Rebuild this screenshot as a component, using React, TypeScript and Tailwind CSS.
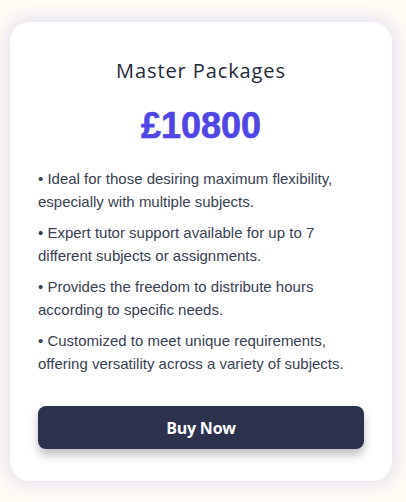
export default function App() {
  const points = [
    '• Ideal for those desiring maximum flexibility, especially with multiple subjects.',
    '• Expert tutor support available for up to 7 different subjects or assignments.',
    '• Provides the freedom to distribute hours according to specific needs.',
    '• Customized to meet unique requirements, offering versatility across a variety of subjects.',
  ]

  return (
    <div className="min-h-[502px] w-[406px] bg-[#fffaf4] pt-[22px] pl-[10px]">
      {/* Package Card */}
      <div className="w-[382px] h-[459px] bg-white rounded-[20px] shadow-[0_0_14px_6px_rgba(99,102,241,0.12)] px-[28px] pt-[36px]">
        <h2 className="text-center text-[20px] font-medium text-[#1f2937] font-['Open_Sans',sans-serif] leading-[26px] tracking-[0.9px]">
          Master Packages
        </h2>
        <p className="mt-[22px] text-center text-[36px] font-bold text-[#4f46e5] font-['Liberation_Sans',Arial,sans-serif] leading-[40px] [-webkit-text-stroke:0.6px_#4f46e5]">
          £10800
        </p>

        <div className="mt-[21px] flex flex-col gap-[8px]">
          {points.map((p) => (
            <p key={p} className="text-[15px] leading-[23px] text-[#374151] font-['Liberation_Sans',Arial,sans-serif]">
              {p}
            </p>
          ))}
        </div>

        <button
          type="button"
          className="mt-[31px] w-full h-[43px] rounded-[8px] bg-[#2c324e] text-white text-[16px] font-bold font-['Open_Sans',sans-serif] tracking-[-0.2px] shadow-[0_6px_10px_rgba(0,0,0,0.25)]"
        >
          Buy Now
        </button>
      </div>
    </div>
  )
}
